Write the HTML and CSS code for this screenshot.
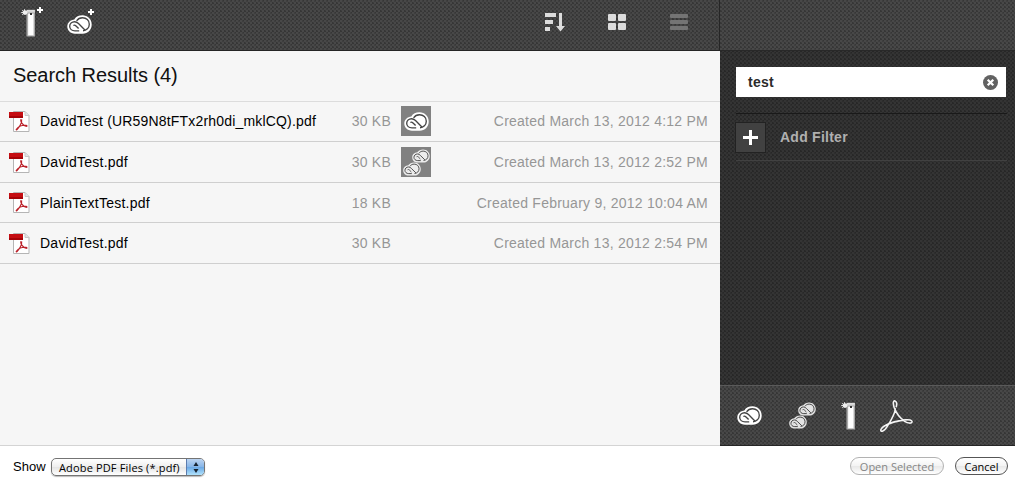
FILE: index.html
```html
<!DOCTYPE html>
<html lang="en">
<head>
<meta charset="utf-8">
<title>Search Results</title>
<link rel="stylesheet" href="styles.css">
</head>
<body>
<svg class="defs" width="0" height="0" aria-hidden="true">
  <symbol id="cc" viewBox="0 0 25 19">
    <path class="cloud" d="M8 18.7C3.4 18.7.3 15.4.3 11.5C.3 7.5 3.5 4.6 7.3 4.4C8.9 1.8 12 .3 15.4.3C20.8.3 24.7 4.4 24.7 9.4C24.7 14.7 20.7 18.7 15.7 18.7Z"/>
    <path class="line" d="M12.2 15.9H8C4.8 15.9 2.7 13.9 2.7 11.3S4.9 6.7 7.6 6.7C9.4 6.7 10.4 7.5 11.5 8.6L17.9 14.9M9.6 5.8C10.8 3.9 13 2.7 15.5 2.7C19.4 2.7 22.3 5.5 22.3 9.2S19.4 15.7 16 15.7M11.6 13.6L9 11C8.2 10.2 7.2 9.9 6.4 10.5"/>
  </symbol>
  <symbol id="ccs" viewBox="0 0 27 27">
    <use class="soft" href="#cc" x="9" y="0" width="18" height="14"/>
    <use class="soft" href="#cc" x="0" y="13" width="18" height="14"/>
  </symbol>
  <symbol id="tower" viewBox="0 0 15 28">
    <path d="M5.6.8H14V27.4H5.6Z" fill="#c8c8c8"/>
    <path d="M7.2 5H12.5V26H7.2Z" fill="#fff"/>
    <path d="M6 1.3H13.5V4H6Z" fill="#e8e8e8"/>
    <path d="M5.5 3.2H13.7M6.3 4V27M13.4 4V27" stroke="#888" stroke-width=".6"/>
    <path d="M9 4H11V6H9Z" fill="#333"/>
    <path d="M.2 3.5H2M3.5.2V2M1.2 1.2L2 2M1.2 5.8L2 5" stroke="#ddd"/>
    <circle cx="4" cy="3.6" r="2.4" fill="#eee"/>
  </symbol>
  <symbol id="plus" viewBox="0 0 6 6"><path d="M3 0V6M0 3H6" stroke="#fff" stroke-width="2"/></symbol>
  <symbol id="pdf" viewBox="0 0 21 21">
    <path d="M4.5.5H16L20 4.5V20.5H4.5Z" fill="#fff" stroke="#b5b5b5"/>
    <path d="M16 .5V4.5H20" fill="#e4e4e4" stroke="#c8c8c8"/>
    <path d="M0 1H14V7H0Z" fill="#c50d12"/><path d="M0 5H14V7H0Z" fill="#a60308"/>
    <path d="M11.9 8.2C11 10.5 13.5 14 17 15.2C18 15.6 18.4 14.7 17.2 14.4C13.5 13.8 10 15.3 7.7 17.8C6.7 18.8 7.4 19.4 8.4 18.2C10.7 15.5 12.9 11 12.6 8.4" fill="none" stroke="#ba2028" stroke-width="1.2"/>
  </symbol>
  <symbol id="acrobat" viewBox="0 0 33 32">
    <path d="M16.1 7.2C17.2 4.4 16.8 1.5 14.9.9C13 .6 13 3.8 14.1 7.3C15.9 12.6 20.3 18.2 24.7 21.3C27.9 23.4 31.4 23.7 32 22C32.4 20.1 29 19.4 25.2 19.9C18.4 20.7 8.5 23.6 4.4 26C1.4 27.8.1 30.1 1.2 31.1C2.5 32 5.1 29.7 6.8 27.1C10.6 21.2 15.2 12.2 15.4 8.2" fill="none" stroke="#f4f4f4" stroke-width="1.6"/>
  </symbol>
</svg>
<div class="app">
  <div class="panes">
    <main class="main">
      <header class="toolbar texture">
        <div class="add add-tower"><svg width="15" height="28"><use href="#tower"/></svg><svg class="badge" width="6" height="6"><use href="#plus"/></svg></div>
        <div class="add add-cloud"><svg width="25" height="19"><use href="#cc"/></svg><svg class="badge" width="6" height="6"><use href="#plus"/></svg></div>
        <div class="views">
          <svg width="20" height="19" viewBox="0 0 20 19" fill="#dcdcdc"><path d="M0 0H11V4H0ZM0 7H8V11H0ZM0 14H5V18H0ZM14 0H17V13H20L15.5 18.5L11 13H14Z"/></svg>
          <svg width="18" height="16" viewBox="0 0 18 16" fill="#dcdcdc"><rect width="8" height="7" rx="1"/><rect x="10" width="8" height="7" rx="1"/><rect y="9" width="8" height="7" rx="1"/><rect x="10" y="9" width="8" height="7" rx="1"/></svg>
          <svg width="18" height="16" viewBox="0 0 18 16" fill="#747474"><rect width="18" height="4" rx="1"/><rect y="6" width="18" height="4" rx="1"/><rect y="12" width="18" height="4" rx="1"/></svg>
        </div>
      </header>
      <h1 class="title">Search Results (4)</h1>
      <ul class="files">
        <li class="file first"><svg width="21" height="21"><use href="#pdf"/></svg><span class="name long">DavidTest (UR59N8tFTx2rh0di_mklCQ).pdf</span><span class="size">30 KB</span><span class="source"><svg width="25" height="19"><use href="#cc"/></svg></span><span class="date">Created March 13, 2012 4:12 PM</span></li>
        <li class="file tall"><svg width="21" height="21"><use href="#pdf"/></svg><span class="name">DavidTest.pdf</span><span class="size">30 KB</span><span class="source"><svg width="27" height="27"><use href="#ccs"/></svg></span><span class="date">Created March 13, 2012 2:52 PM</span></li>
        <li class="file"><svg width="21" height="21"><use href="#pdf"/></svg><span class="name">PlainTextTest.pdf</span><span class="size">18 KB</span><span class="date">Created February 9, 2012 10:04 AM</span></li>
        <li class="file tall"><svg width="21" height="21"><use href="#pdf"/></svg><span class="name">DavidTest.pdf</span><span class="size">30 KB</span><span class="date">Created March 13, 2012 2:54 PM</span></li>
      </ul>
    </main>
    <aside class="side texture dark">
      <div class="side-top texture"></div>
      <div class="filters">
        <div class="search"><span>test</span><svg width="15" height="15" viewBox="0 0 15 15"><circle cx="7.5" cy="7.5" r="7.5" fill="#626262"/><path d="M4.7 4.7L10.3 10.3M10.3 4.7L4.7 10.3" stroke="#fff" stroke-width="2.2"/></svg></div>
        <div class="add-filter"><span class="add-button"><svg width="15" height="15" viewBox="0 0 15 15"><path d="M7.5 0V15M0 7.5H15" stroke="#fff" stroke-width="3"/></svg></span><span>Add Filter</span></div>
      </div>
      <div class="sources texture">
        <svg width="25" height="19"><use href="#cc"/></svg>
        <svg width="27" height="27"><use href="#ccs"/></svg>
        <svg width="15" height="28"><use href="#tower"/></svg>
        <svg width="33" height="32"><use href="#acrobat"/></svg>
      </div>
    </aside>
  </div>
  <footer class="footer">
    <span class="show">Show</span>
    <div class="select"><span>Adobe PDF Files (*.pdf)</span><i class="stepper"><svg width="6" height="11" viewBox="0 0 6 11"><path d="M3 0L5.5 4H.5ZM3 11L5.5 7H.5Z" fill="#172330"/></svg></i></div>
    <button class="button open" disabled>Open Selected</button>
    <button class="button cancel">Cancel</button>
  </footer>
</div>
</body>
</html>
```
FILE: styles.css
```css
* { box-sizing: border-box; }
body { margin: 0; background: #fff; font-family: "Liberation Sans", Arial, sans-serif; overflow: hidden; }
svg { display: block; flex: none; }
.defs { position: absolute; }
.cloud { fill: #fff; }
.line { fill: none; stroke: #444; stroke-width: 1.35; }
.soft { opacity: .85; }
.app { width: 1015px; height: 482px; display: flex; flex-direction: column; }
.panes { display: flex; height: 446px; }
.texture {
  background-color: #484848;
  background-image:
    linear-gradient(45deg, #363636 25%, transparent 25%, transparent 75%, #363636 75%),
    linear-gradient(45deg, #3e3e3e 25%, transparent 25%, transparent 75%, #3e3e3e 75%);
  background-size: 4px 4px;
  background-position: 0 0, 2px 2px;
}
.main { width: 720px; background: #f6f6f6; border-bottom: 1px solid #d4d4d4; }
.toolbar { height: 51px; display: flex; border-bottom: 1px solid #252525; border-right: 1px solid #262626; }
.add { position: relative; }
.badge { position: absolute; }
.add-tower { margin: 9px 0 0 21px; }
.add-tower .badge { left: 16px; top: -2px; }
.add-cloud { margin: 15px 0 0 31px; }
.add-cloud .badge { left: 21px; top: -6px; }
.views { display: flex; align-items: flex-start; margin: 13px 31px 0 auto; gap: 44px; }
.views svg:first-child { margin-right: -1px; }
.views svg + svg { margin-top: 1px; }
.title { margin: 0; height: 51px; padding: 13px 13px 0; border-bottom: 1px solid #dcdcdc; font-weight: 400; font-size: 20px; line-height: 23px; letter-spacing: -.05px; color: #111; }
.files { list-style: none; margin: 0; padding: 0; }
.file { height: 40px; display: flex; align-items: center; padding: 0 12px 0 9px; border-bottom: 1px solid #cfcfcf; font-size: 14px; letter-spacing: .24px; white-space: nowrap; }
.first { padding-bottom: 1px; }
.tall { height: 41px; }
.name { width: 278px; margin-left: 10px; color: #000; }
.long { letter-spacing: .18px; }
.size { width: 73px; text-align: right; color: #969696; }
.source { width: 30px; height: 30px; margin-left: 10px; background: #818181; display: flex; align-items: center; justify-content: center; }
.date { margin-left: auto; color: #969696; }
.side { width: 295px; display: flex; flex-direction: column; }
.dark {
  background-color: #343434;
  background-image:
    linear-gradient(45deg, #272727 25%, transparent 25%, transparent 75%, #272727 75%),
    linear-gradient(45deg, #2d2d2d 25%, transparent 25%, transparent 75%, #2d2d2d 75%);
}
.side-top { height: 50px; }
.filters { flex: 1; padding: 17px 8px 0 16px; border-top: 1px solid #282828; }
.search { height: 30px; margin-top: -1px; background: #fff; display: flex; align-items: center; justify-content: space-between; padding: 0 8px 0 12px; margin-right: 1px; font-weight: 700; font-size: 14px; letter-spacing: .25px; color: #2b2b2b; }
.add-filter { height: 48px; margin-top: 16px; display: flex; align-items: center; gap: 15px; border-top: 1px solid #191919; border-bottom: 1px solid #414141; font-weight: 700; font-size: 14px; letter-spacing: .25px; color: #b0b0b0; }
.add-button { width: 29px; height: 29px; background: #414141; outline: 1px solid #222; display: flex; align-items: center; justify-content: center; }
.sources { height: 61px; border-top: 1px solid #5a5a5a; border-bottom: 1px solid #252525; display: flex; align-items: center; padding-left: 17px; }
.sources svg:nth-child(2) { margin-left: 27px; }
.sources svg:nth-child(3) { margin-left: 25px; }
.sources svg:nth-child(4) { margin-left: 24px; }
.footer { height: 36px; display: flex; align-items: flex-start; padding: 11px 7px 0 13px; font-size: 13px; }
.show { width: 38px; margin-top: 2px; line-height: 15px; }
.select { width: 154px; height: 18px; margin-top: 1px; display: flex; align-items: center; justify-content: space-between; border: 1px solid #747474; border-radius: 5px; overflow: hidden; padding-left: 7px; background: linear-gradient(#fff, #eee 50%, #e4e4e4 51%, #fff); font: 500 11px "Open Sans", sans-serif; letter-spacing: .15px; white-space: nowrap; box-shadow: 0 1px 1px #bbb; }
.stepper { width: 18px; height: 18px; flex: none; display: flex; align-items: center; justify-content: center; background: linear-gradient(#c3d8f2, #86b5e8 50%, #6aa8e5 51%, #b9eaff); border-left: 1px solid #5c7cae; }
.button { height: 18px; padding: 0; border-radius: 9px; font: 500 11px/15px "Open Sans", sans-serif; background: linear-gradient(#fff, #f3f3f3 50%, #e8e8e8 51%, #fff); }
.open { width: 94px; margin-left: auto; border: 1px solid #b2b2b2; color: #858585; }
.cancel { width: 53px; margin-left: 11px; border: 1px solid #555; color: #000; }
```
